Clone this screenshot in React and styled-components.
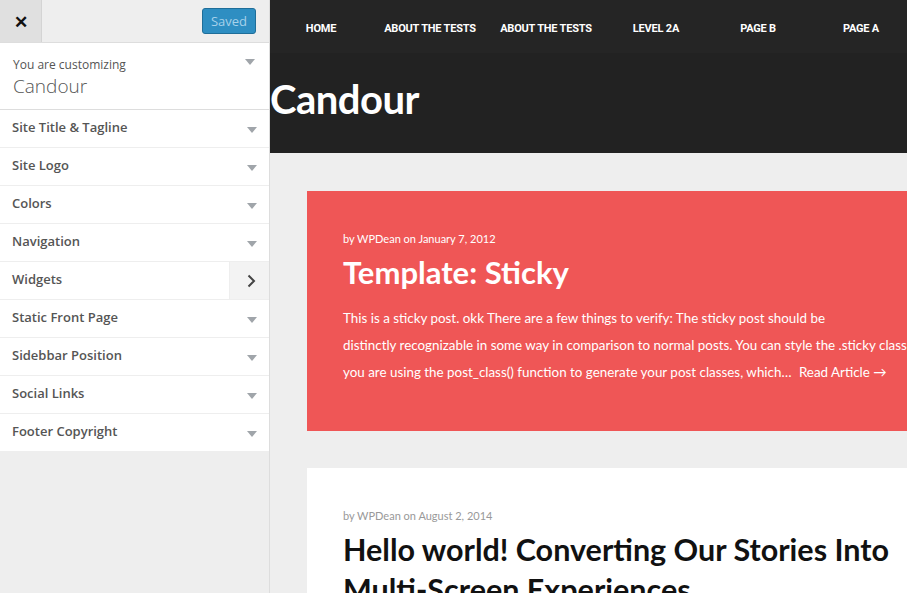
import styled, { createGlobalStyle } from "styled-components"

const Global = createGlobalStyle`
  html, body { margin: 0; padding: 0; height: 100%; overflow: hidden; }
  body { background: #eee; }
  #root { height: 100%; }
`

const sections = [
  "Site Title & Tagline",
  "Site Logo",
  "Colors",
  "Navigation",
  "Widgets",
  "Static Front Page",
  "Sidebbar Position",
  "Social Links",
  "Footer Copyright",
]

const menu = [
  { label: "HOME", w: 102 },
  { label: "ABOUT THE TESTS", w: 116 },
  { label: "ABOUT THE TESTS", w: 116 },
  { label: "LEVEL 2A", w: 104 },
  { label: "PAGE B", w: 100 },
  { label: "PAGE A", w: 106 },
]

const Caret = () => (
  <svg width="10" height="6" viewBox="0 0 10 6">
    <path d="M0 0 L10 0 L5 6 Z" fill="#a0a5aa" />
  </svg>
)

const Chevron = () => (
  <svg width="9" height="14" viewBox="0 0 9 14">
    <path d="M1.5 1.5 L7 7 L1.5 12.5" fill="none" stroke="#444" strokeWidth="2" />
  </svg>
)

export default function App() {
  return (
    <>
      <Global />
      <Page>
        <Sidebar>
          <TopBar>
            <CloseButton>✕</CloseButton>
            <SavedButton>Saved</SavedButton>
          </TopBar>
          <Info>
            <div>
              <InfoLabel>You are customizing</InfoLabel>
              <InfoTitle>Candour</InfoTitle>
            </div>
            <InfoCaret><Caret /></InfoCaret>
          </Info>
          <Sections>
            {sections.map((s) => (
              <Section key={s}>
                <SectionTitle>{s}</SectionTitle>
                {s === "Widgets" ? (
                  <ArrowCell><Chevron /></ArrowCell>
                ) : (
                  <CaretCell><Caret /></CaretCell>
                )}
              </Section>
            ))}
          </Sections>
        </Sidebar>

        <Preview>
          <Masthead>
            <Nav>
              {menu.map((m, i) => (
                <NavItem key={i} $w={m.w}>{m.label}</NavItem>
              ))}
            </Nav>
            <SiteTitle>Candour</SiteTitle>
          </Masthead>
          <Posts>
            <Post $sticky>
              <Meta $sticky>by WPDean on January 7, 2012</Meta>
              <PostTitle $sticky>Template: Sticky</PostTitle>
              <Excerpt>
                This is a sticky post. okk There are a few things to verify: The sticky post should be<br />
                distinctly recognizable in some way in comparison to normal posts. You can style the .sticky class if<br />
                you are using the post_class() function to generate your post classes, which… <ReadMore>Read Article →</ReadMore>
              </Excerpt>
            </Post>
            <Post>
              <Meta>by WPDean on August 2, 2014</Meta>
              <PostTitle>Hello world! Converting Our Stories Into Multi-Screen Experiences</PostTitle>
            </Post>
          </Posts>
        </Preview>
      </Page>
    </>
  )
}

const Page = styled.div`
  display: flex;
  height: 593px;
  width: 907px;
  overflow: hidden;
`

const Sidebar = styled.aside`
  width: 269px;
  flex-shrink: 0;
  background: #eee;
  border-right: 1px solid #ddd;
  font-family: "Open Sans", sans-serif;
  color: #555;
`

const TopBar = styled.div`
  display: flex;
  align-items: center;
  justify-content: space-between;
  height: 42px;
  border-bottom: 1px solid #ddd;
  padding-right: 13px;
`

const CloseButton = styled.div`
  width: 42px;
  height: 42px;
  display: flex;
  align-items: center;
  justify-content: center;
  background: #e0e0e0;
  border-right: 1px solid #d4d4d4;
  font-size: 17px;
  font-weight: 700;
  color: #111;
  box-sizing: border-box;
`

const SavedButton = styled.div`
  height: 24px;
  padding: 0 8px;
  display: flex;
  align-items: center;
  background: #2e8ec2;
  border: 1px solid #1f6e99;
  border-radius: 3px;
  color: #a6d1ea;
  font-size: 13px;
`

const Info = styled.div`
  display: flex;
  justify-content: space-between;
  align-items: flex-start;
  background: #fff;
  padding: 14px 14px 11px 13px;
  border-bottom: 1px solid #ddd;
  height: 41px;
`

const InfoLabel = styled.div`
  font-size: 12px;
  line-height: 16px;
  color: #555;
`

const InfoTitle = styled.div`
  font-size: 19px;
  font-weight: 300;
  line-height: 26px;
  color: #555;
`

const InfoCaret = styled.div`
  display: flex;
  padding-top: 2px;
`

const Sections = styled.div`
  display: flex;
  flex-direction: column;
`

const Section = styled.div`
  display: flex;
  align-items: stretch;
  justify-content: space-between;
  height: 37px;
  background: #fff;
  border-bottom: 1px solid #eee;
  padding-left: 12px;
`

const SectionTitle = styled.div`
  display: flex;
  align-items: center;
  padding-bottom: 3px;
  font-size: 13px;
  font-weight: 600;
  color: #555;
`

const CaretCell = styled.div`
  width: 34px;
  display: flex;
  align-items: center;
  justify-content: center;
  padding-top: 2px;
`

const ArrowCell = styled.div`
  width: 40px;
  display: flex;
  align-items: center;
  justify-content: center;
  padding-left: 4px;
  box-sizing: border-box;
  background: #f3f3f3;
  border-left: 1px solid #eee;
`

const Preview = styled.main`
  flex: 1;
  background: #eee;
  font-family: "Lato", sans-serif;
  overflow: hidden;
`

const Masthead = styled.header`
  background: #222;
  height: 153px;
`

const Nav = styled.nav`
  display: flex;
  height: 53px;
  background: #252525;
  align-items: center;
`

const NavItem = styled.div`
  width: ${(p) => p.$w}px;
  flex-shrink: 0;
  text-align: center;
  color: #fff;
  font-family: "Liberation Sans Narrow", "Roboto", sans-serif;
  font-weight: 700;
  font-size: 11px;
  letter-spacing: -0.2px;
  padding-top: 3px;
`

const SiteTitle = styled.h1`
  margin: 0;
  padding-top: 26px;
  color: #fff;
  font-size: 40px;
  font-weight: 700;
  line-height: 40px;
  letter-spacing: -0.5px;
`

const Posts = styled.div`
  display: flex;
  flex-direction: column;
  gap: 37px;
  padding: 38px 0 0 37px;
`

const Post = styled.article`
  background: ${(p) => (p.$sticky ? "#ef5656" : "#fff")};
  padding: 41px 0 0 36px;
  white-space: nowrap;
  ${(p) => (p.$sticky ? "height: 199px;" : "")}
`

const Meta = styled.div`
  font-size: 11px;
  line-height: 14px;
  color: ${(p) => (p.$sticky ? "#fff" : "#999")};
`

const PostTitle = styled.h2`
  margin: 6px 0 0;
  font-size: 30.5px;
  font-weight: 700;
  line-height: 40px;
  color: ${(p) => (p.$sticky ? "#fff" : "#111")};
  white-space: normal;
  width: 560px;
  ${(p) => (p.$sticky ? "font-size: 31px;" : "")}
`

const Excerpt = styled.p`
  margin: 13px 0 0;
  font-size: 13.4px;
  line-height: 27px;
  color: #fff;
`

const ReadMore = styled.span`
  margin-left: 4px;
`
